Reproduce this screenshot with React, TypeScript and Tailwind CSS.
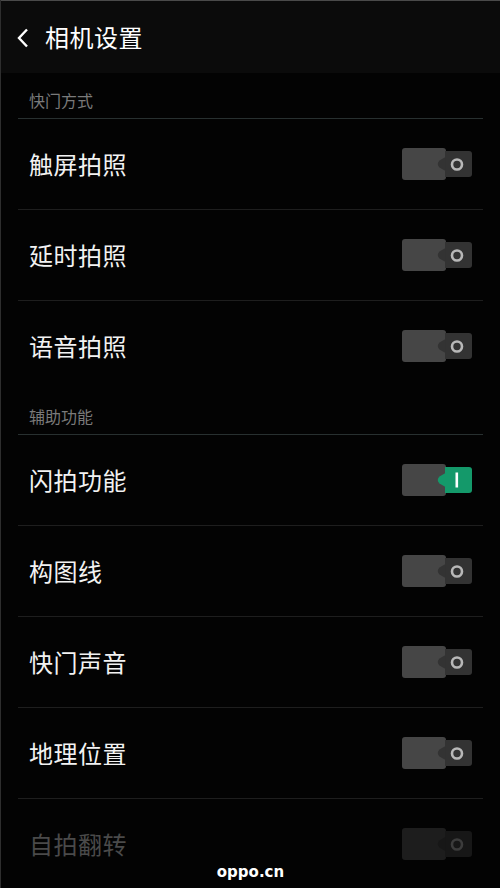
import React from "react";

type Row = { label: string; on?: boolean; disabled?: boolean };

const shutterRows: Row[] = [
  { label: "触屏拍照" },
  { label: "延时拍照" },
  { label: "语音拍照" },
];

const assistRows: Row[] = [
  { label: "闪拍功能", on: true },
  { label: "构图线" },
  { label: "快门声音" },
  { label: "地理位置" },
  { label: "自拍翻转", disabled: true },
];

const Toggle: React.FC<{ on?: boolean; disabled?: boolean }> = ({ on, disabled }) => {
  const base = disabled ? "#1d1d1d" : "#464646";
  const side = on ? "#14996a" : disabled ? "#171717" : "#333333";
  const ring = disabled ? "#3c3c3c" : "#b8b8b8";
  return (
    <svg width="70" height="32" viewBox="0 0 70 32" className="shrink-0">
      <rect x="0" y="0" width="44" height="32" rx="3" fill={base} />
      <path d="M43 3H67a3 3 0 0 1 3 3V26a3 3 0 0 1-3 3H43Z" fill={side} />
      <path d="M43.5 9L37.5 12.5Q34 16 37.5 19.5L43.5 23Z" fill={side} />
      {on ? (
        <rect x="53.5" y="8.5" width="2.6" height="15" fill="#ffffff" />
      ) : (
        <circle cx="55" cy="16.5" r="5" fill="none" stroke={ring} strokeWidth="2.6" />
      )}
    </svg>
  );
};

const SettingRow: React.FC<{ row: Row; last?: boolean }> = ({ row, last }) => (
  <div className={`mx-[17px] ${last ? "" : "border-b border-[#1e1e1e]"}`}>
    <div className="h-[90px] flex items-center justify-between pl-[11px] pr-[11px]">
      <span
        className={`text-[24px] leading-none tracking-[0.5px] ${
          row.disabled ? "text-[#4a4a4a]" : "text-[#f2f2f2]"
        }`}
      >
        {row.label}
      </span>
      <Toggle on={row.on} disabled={row.disabled} />
    </div>
  </div>
);

const SectionTitle: React.FC<{ title: string; height: string }> = ({ title, height }) => (
  <div className={`mx-[17px] ${height} flex items-end pb-[8px] pl-[11px] border-b border-[#283030]`}>
    <span className="text-[16px] leading-[20px] text-[#7a7a7a]">{title}</span>
  </div>
);

export default function App() {
  return (
    <div
      className="relative w-[500px] h-[888px] overflow-hidden bg-[#030303] border-l border-[#2e2e2e]"
      style={{ fontFamily: '"Noto Sans CJK SC", "Noto Sans", sans-serif' }}
    >
      <div className="h-[73px] bg-[#0b0b0b] border-t border-[#4a4a4a] flex items-center pl-[16px]">
        <svg width="12" height="20" viewBox="0 0 12 20" className="mt-[1px]">
          <path d="M10 1.5L2 10L10 18.5" fill="none" stroke="#ffffff" strokeWidth="2.4" />
        </svg>
        <span className="ml-[16px] text-[24px] leading-none text-white tracking-[0.5px]">相机设置</span>
      </div>

      <SectionTitle title="快门方式" height="h-[46px]" />
      {shutterRows.map((r, i) => (
        <SettingRow key={r.label} row={r} last={i === shutterRows.length - 1} />
      ))}

      <SectionTitle title="辅助功能" height="h-[44px]" />
      {assistRows.map((r) => (
        <SettingRow key={r.label} row={r} />
      ))}

      <div
        className="absolute left-0 right-0 bottom-[7px] text-center text-[15px] leading-[18px] font-bold text-white"
        style={{ fontFamily: '"DejaVu Sans", sans-serif' }}
      >
        oppo.cn
      </div>
    </div>
  );
}
